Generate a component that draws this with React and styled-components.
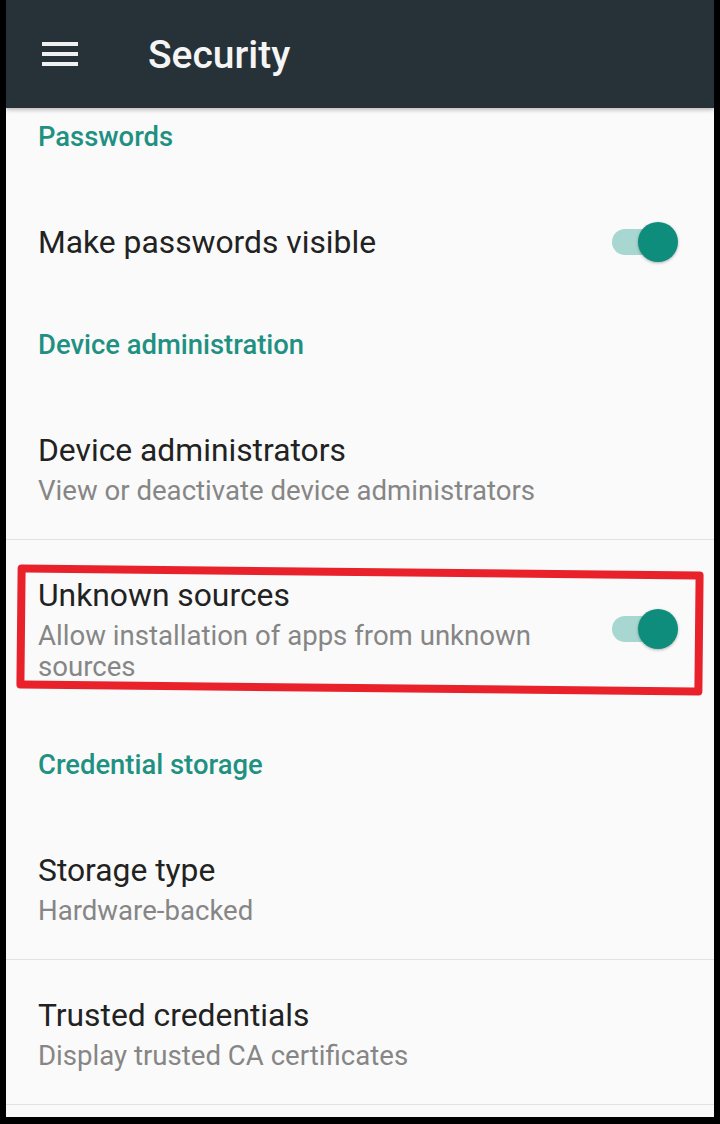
import React from "react";
import styled, { createGlobalStyle } from "styled-components";

const Global = createGlobalStyle`
  html, body { margin: 0; padding: 0; background: #000; }
  body { font-family: Roboto, "Noto Sans", "Liberation Sans", sans-serif; -webkit-font-smoothing: antialiased; }
  * { box-sizing: border-box; }
`;

const Frame = styled.div`
  width: 720px;
  height: 1124px;
  background: #000;
  padding: 0 6px 7px 6px;
  display: flex;
  flex-direction: column;
`;

const Screen = styled.div`
  flex: 1;
  background: #fafafa;
  display: flex;
  flex-direction: column;
  overflow: hidden;
`;

const AppBar = styled.header`
  height: 108px;
  flex: none;
  background: #263238;
  display: flex;
  align-items: center;
  padding-left: 36px;
  gap: 70px;
  box-shadow: 0 2px 4px rgba(0, 0, 0, 0.25);
  position: relative;
  z-index: 1;
`;

const Title = styled.h1`
  margin: 0;
  color: #f5f5f5;
  font-size: 39px;
  font-weight: 500;
  letter-spacing: 0;
  line-height: 1;
  padding-top: 2px;
`;

const List = styled.div`
  display: flex;
  flex-direction: column;
`;

const Category = styled.div`
  padding: ${(p) => (p.$first ? "13px" : "34px")} 38px 34px 32px;
  color: #1f9182;
  font-size: 27.4px;
  font-weight: 500;
  line-height: 32px;
`;

const Row = styled.div`
  position: relative;
  display: flex;
  align-items: center;
  padding: 35px 36px 33px 32px;
  border-bottom: ${(p) => (p.$divider ? "1px solid #e2e2e2" : "none")};
`;

const Texts = styled.div`
  flex: 1;
  min-width: 0;
  padding-right: 30px;
`;

const RowTitle = styled.div`
  color: #222;
  font-size: 31.8px;
  line-height: 40px;
`;

const RowSummary = styled.div`
  margin-top: 5px;
  color: #868686;
  font-size: 27.6px;
  line-height: 31px;
`;

const Switch = styled.div`
  position: relative;
  width: 66px;
  height: 40px;
  flex: none;
`;

const Track = styled.div`
  position: absolute;
  left: 0;
  top: 7px;
  width: 58px;
  height: 26px;
  border-radius: 13px;
  background: #a7d7d0;
`;

const Thumb = styled.div`
  position: absolute;
  right: 0;
  top: 0;
  width: 40px;
  height: 40px;
  border-radius: 50%;
  background: #0e8d7c;
  box-shadow: 0 1px 3px rgba(0, 0, 0, 0.3);
`;

const Highlight = styled.div`
  position: absolute;
  left: 11px;
  top: 28px;
  width: 686px;
  height: 124px;
  border: 8px solid #e8212b;
  border-radius: 4px;
  transform: rotate(0.6deg);
  pointer-events: none;
`;

const MenuIcon = () => (
  <svg width="36" height="24" viewBox="0 0 36 24" aria-hidden="true">
    <rect x="0" y="0" width="36" height="4" fill="#f0f0f0" />
    <rect x="0" y="10" width="36" height="4" fill="#f0f0f0" />
    <rect x="0" y="20" width="36" height="4" fill="#f0f0f0" />
  </svg>
);

const Toggle = () => (
  <Switch>
    <Track />
    <Thumb />
  </Switch>
);

const Pref = ({ title, summary, toggle, divider, highlight }) => (
  <Row $divider={divider}>
    <Texts>
      <RowTitle>{title}</RowTitle>
      {summary && <RowSummary>{summary}</RowSummary>}
    </Texts>
    {toggle && <Toggle />}
    {highlight && <Highlight />}
  </Row>
);

export default function App() {
  return (
    <>
      <Global />
      <Frame>
        <Screen>
          <AppBar>
            <MenuIcon />
            <Title>Security</Title>
          </AppBar>
          <List>
            <Category $first>Passwords</Category>
            <Pref title="Make passwords visible" toggle />
            <Category>Device administration</Category>
            <Pref
              title="Device administrators"
              summary="View or deactivate device administrators"
              divider
            />
            <Pref
              title="Unknown sources"
              summary="Allow installation of apps from unknown sources"
              toggle
              highlight
            />
            <Category>Credential storage</Category>
            <Pref title="Storage type" summary="Hardware-backed" divider />
            <Pref
              title="Trusted credentials"
              summary="Display trusted CA certificates"
              divider
            />
          </List>
        </Screen>
      </Frame>
    </>
  );
}
